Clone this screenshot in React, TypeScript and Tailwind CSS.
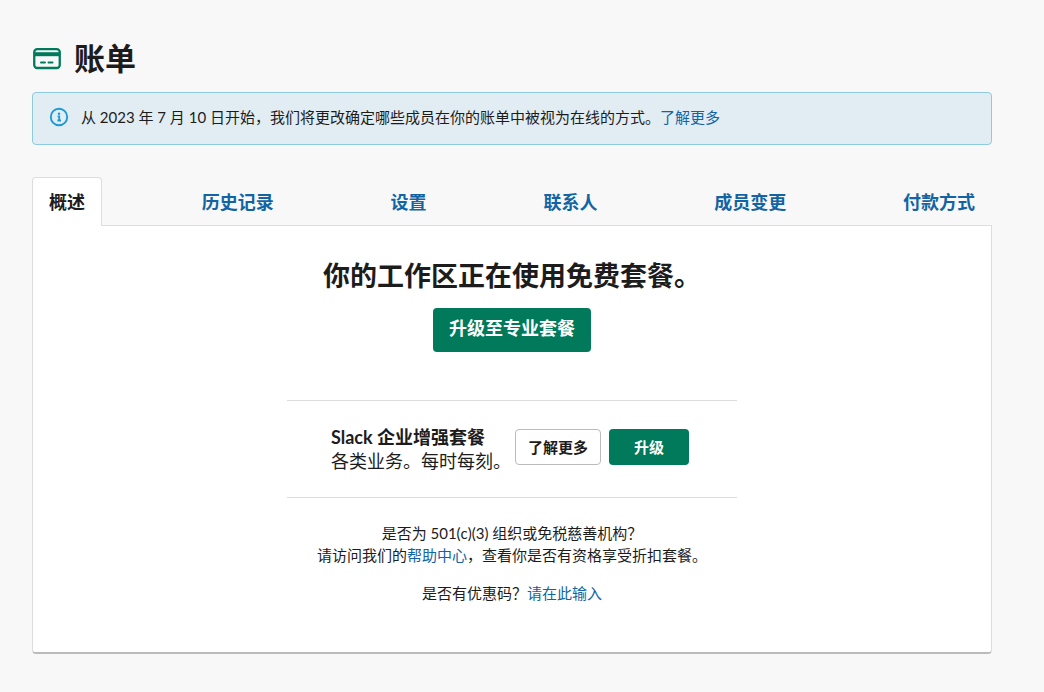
const tabs = [
  { id: 'overview', label: '概述' },
  { id: 'history', label: '历史记录' },
  { id: 'settings', label: '设置' },
  { id: 'contacts', label: '联系人' },
  { id: 'members', label: '成员变更' },
  { id: 'payment', label: '付款方式' },
]

const activeTab = 'overview'

function CardIcon() {
  return (
    <svg width="30" height="24" viewBox="0 0 30 24" fill="none" aria-hidden="true">
      <rect x="2.25" y="3.1" width="25.5" height="18.9" rx="3" stroke="#007a5a" strokeWidth="2.3" />
      <path d="M2.5 6.2h25v4h-25z" fill="#007a5a" />
      <path d="M9 16.5h4M16.5 16.5h4" stroke="#007a5a" strokeWidth="2" strokeLinecap="round" />
    </svg>
  )
}

function InfoIcon() {
  return (
    <svg className="shrink-0" width="20" height="20" viewBox="0 0 20 20" fill="none" aria-hidden="true">
      <circle cx="10" cy="10" r="8.2" stroke="#1d9bd1" strokeWidth="1.9" />
      <circle cx="10" cy="6.7" r="1.25" fill="#1d9bd1" />
      <path d="M8.6 9.4h1.6v4M8.4 13.5h3.6" stroke="#1d9bd1" strokeWidth="1.8" />
    </svg>
  )
}

function Banner() {
  return (
    <div className="mt-3 flex items-start gap-3 rounded border border-[#8ecbe0] bg-[#e1edf3] px-4 pt-3.5 pb-4">
      <InfoIcon />
      <p className="text-[15px] leading-[21px]">
        从 2023 年 7 月 10 日开始，我们将更改确定哪些成员在你的账单中被视为在线的方式。
        <a href="#learn" className="text-[#1264a3]">了解更多</a>
      </p>
    </div>
  )
}

function TabBar() {
  return (
    <nav className="mt-8 flex justify-between text-lg leading-7 font-bold">
      {tabs.map((tab) => (
        <a
          key={tab.id}
          href={`#${tab.id}`}
          className={
            tab.id === activeTab
              ? 'relative -mb-px rounded-t border border-b-0 border-[#dddddd] bg-white px-4 py-2.5'
              : 'border border-b-0 border-transparent px-4 pt-2.5 pb-2 text-[#1264a3]'
          }
        >
          {tab.label}
        </a>
      ))}
    </nav>
  )
}

export default function App() {
  return (
    <div className="min-h-screen bg-[#f8f8f8] py-9 pr-[52px] pl-8 font-[Lato,'Noto_Sans_CJK_SC',sans-serif] text-[#1d1c1d]">
      <main lang="zh-CN" className="max-w-[960px]">
        <h1 className="flex items-center gap-3 text-[31px] leading-[44px] font-bold">
          <CardIcon />
          账单
        </h1>
        <Banner />
        <TabBar />

        <section className="rounded-b border border-b-2 border-[#dddddd] border-b-[#bbbbbb] bg-white pt-8 pb-12 text-center">
          <h2 className="text-[27px] leading-9 font-bold">你的工作区正在使用免费套餐。</h2>
          <button type="button" className="mt-3.5 h-11 rounded bg-[#007a5a] px-4 pb-1 text-lg font-bold text-white">
            升级至专业套餐
          </button>

          <div className="mx-auto mt-12 flex max-w-[450px] items-start justify-center border-y border-[#dddddd] py-6">
            <div className="text-left text-lg leading-6">
              <h3 className="font-bold">Slack 企业增强套餐</h3>
              <p>各类业务。每时每刻。</p>
            </div>
            <div className="mx-1 mt-1 flex gap-2 text-[15px] font-bold">
              <button type="button" className="h-9 rounded border border-[#bbbbbb] bg-white px-3">
                了解更多
              </button>
              <button type="button" className="h-9 min-w-20 rounded bg-[#007a5a] px-3 text-white">
                升级
              </button>
            </div>
          </div>

          <div className="mt-6 text-[15px] leading-[22px]">
            <p>
              是否为 501(c)(3) 组织或免税慈善机构？
              <br />
              请访问我们的<a href="#help" className="text-[#1264a3]">帮助中心</a>，查看你是否有资格享受折扣套餐。
            </p>
            <p className="mt-4">
              是否有优惠码？<a href="#code" className="text-[#1264a3]">请在此输入</a>
            </p>
          </div>
        </section>
      </main>
    </div>
  )
}
